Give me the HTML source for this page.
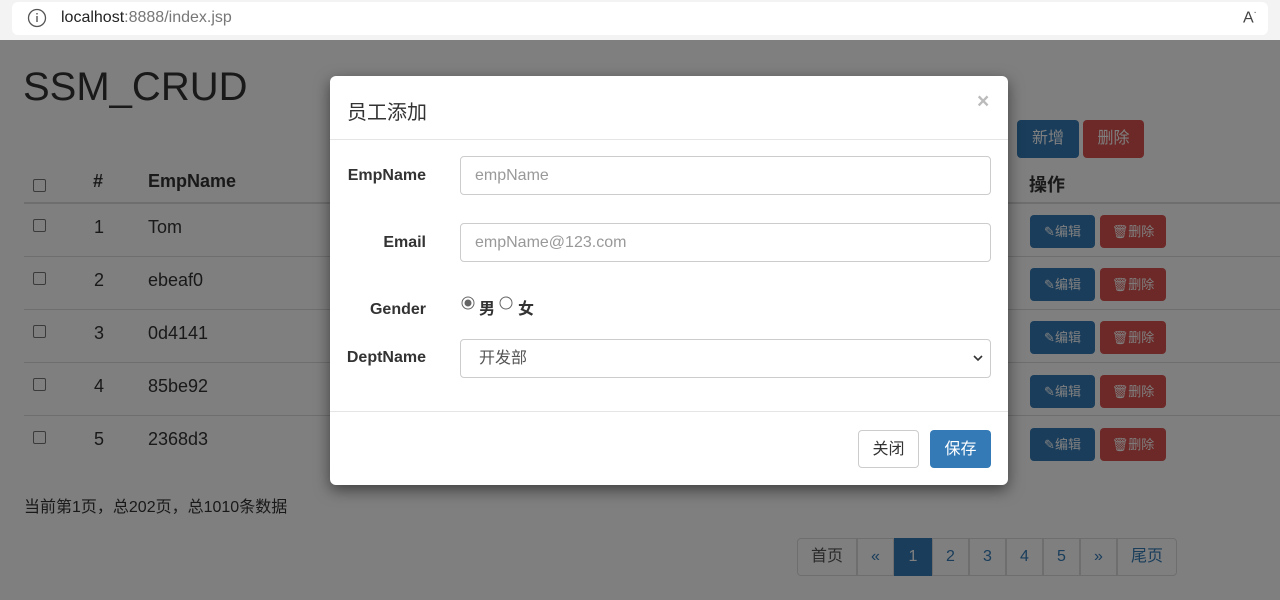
<!DOCTYPE html>
<html><head><meta charset="utf-8"><style>
*{box-sizing:border-box;margin:0;padding:0}
body{width:1280px;height:600px;overflow:hidden;background:#fff;font-family:"Liberation Sans","Noto Sans CJK SC",sans-serif;color:#333;font-size:14px;position:relative}
.a{position:absolute}
.bar{left:0;top:0;width:1280px;height:40px;background:#f3f3f3}
.url{left:12px;top:2px;width:1256px;height:33px;background:#fff;border-radius:6px}
.cb{width:13px;height:13px;border:1px solid #767676;border-radius:2px;background:#fff}
.th{font-weight:bold;font-size:18px}
.td{font-size:18px}
.hl{left:24px;width:1256px;height:1px;background:#ddd}
.btn{border-radius:4px;color:#fff;text-align:center}
.bl{background:#337ab7}.rd{background:#d9534f}
.pg{top:538px;height:38px;border:1px solid #ddd;margin-left:-1px;color:#337ab7;font-size:16px;line-height:36px;text-align:center}
.ov{left:0;top:40px;width:1280px;height:560px;background:rgba(0,0,0,.5)}
.modal{left:330px;top:76px;width:678px;height:409px;background:#fff;border-radius:6px;box-shadow:0 5px 15px rgba(0,0,0,.5)}
.lb{font-weight:bold;font-size:16px;text-align:right;width:96px}
.in{left:130px;width:531px;height:39px;border:1px solid #ccc;border-radius:4px;padding-left:14px;line-height:37px;color:#999;font-size:16px}
</style></head><body>
<div class="a bar"></div><div class="a url"></div>
<svg class="a" style="left:27px;top:8px" width="20" height="20"><circle cx="10" cy="10" r="8.5" fill="none" stroke="#555" stroke-width="1.3"/><rect x="9.3" y="8" width="1.4" height="6" fill="#555"/><rect x="9.3" y="5" width="1.4" height="1.5" fill="#555"/></svg>
<div class="a" style="left:61px;top:9px;font-size:16px;color:#222">localhost<span style="color:#777">:8888/index.jsp</span></div>
<div class="a" style="left:1243px;top:8px;font-size:16px;color:#444">A<sup style="font-size:10px">ᐧ</sup></div>

<div class="a" style="left:23px;top:65px;font-size:40px;color:#333">SSM_CRUD</div>
<div class="a btn bl" style="left:1017px;top:120px;width:62px;height:38px;line-height:38px;font-size:16px">新增</div>
<div class="a btn rd" style="left:1083px;top:120px;width:61px;height:38px;line-height:38px;font-size:16px">删除</div>
<div class="a cb" style="left:33px;top:179px"></div>
<div class="a th" style="left:93px;top:171px">#</div>
<div class="a th" style="left:148px;top:171px">EmpName</div>
<div class="a th" style="left:1029px;top:171px">操作</div>
<div class="a hl" style="top:202px;height:2px"></div>
<div class="a hl" style="top:256px"></div><div class="a hl" style="top:309px"></div><div class="a hl" style="top:362px"></div><div class="a hl" style="top:415px"></div>

<div class="a cb" style="left:33px;top:219px"></div><div class="a td" style="left:94px;top:217px">1</div><div class="a td" style="left:148px;top:217px">Tom</div>
<div class="a cb" style="left:33px;top:272px"></div><div class="a td" style="left:94px;top:270px">2</div><div class="a td" style="left:148px;top:270px">ebeaf0</div>
<div class="a cb" style="left:33px;top:325px"></div><div class="a td" style="left:94px;top:323px">3</div><div class="a td" style="left:148px;top:323px">0d4141</div>
<div class="a cb" style="left:33px;top:378px"></div><div class="a td" style="left:94px;top:376px">4</div><div class="a td" style="left:148px;top:376px">85be92</div>
<div class="a cb" style="left:33px;top:431px"></div><div class="a td" style="left:94px;top:429px">5</div><div class="a td" style="left:148px;top:429px">2368d3</div>

<div class="a btn bl" style="left:1030px;top:215px;width:65px;height:33px;line-height:33px;font-size:13px">✎编辑</div><div class="a btn rd" style="left:1100px;top:215px;width:66px;height:33px;line-height:33px;font-size:13px">🗑删除</div>
<div class="a btn bl" style="left:1030px;top:268px;width:65px;height:33px;line-height:33px;font-size:13px">✎编辑</div><div class="a btn rd" style="left:1100px;top:268px;width:66px;height:33px;line-height:33px;font-size:13px">🗑删除</div>
<div class="a btn bl" style="left:1030px;top:321px;width:65px;height:33px;line-height:33px;font-size:13px">✎编辑</div><div class="a btn rd" style="left:1100px;top:321px;width:66px;height:33px;line-height:33px;font-size:13px">🗑删除</div>
<div class="a btn bl" style="left:1030px;top:375px;width:65px;height:33px;line-height:33px;font-size:13px">✎编辑</div><div class="a btn rd" style="left:1100px;top:375px;width:66px;height:33px;line-height:33px;font-size:13px">🗑删除</div>
<div class="a btn bl" style="left:1030px;top:428px;width:65px;height:33px;line-height:33px;font-size:13px">✎编辑</div><div class="a btn rd" style="left:1100px;top:428px;width:66px;height:33px;line-height:33px;font-size:13px">🗑删除</div>

<div class="a" style="left:24px;top:493px;font-size:16px">当前第1页，总202页，总1010条数据</div>
<div class="a pg" style="left:798px;width:60px;color:#555;border-radius:4px 0 0 4px">首页</div>
<div class="a pg" style="left:858px;width:37px">«</div>
<div class="a pg" style="left:895px;width:38px;background:#337ab7;border-color:#337ab7;color:#fff">1</div>
<div class="a pg" style="left:933px;width:37px">2</div>
<div class="a pg" style="left:970px;width:37px">3</div>
<div class="a pg" style="left:1007px;width:37px">4</div>
<div class="a pg" style="left:1044px;width:37px">5</div>
<div class="a pg" style="left:1081px;width:37px">»</div>
<div class="a pg" style="left:1118px;width:60px;border-radius:0 4px 4px 0">尾页</div>

<div class="a ov"></div>
<div class="a modal">
 <div class="a" style="left:17px;top:20px;font-size:20px;color:#333">员工添加</div>
 <div class="a" style="left:647px;top:14px;font-size:21px;font-weight:bold;color:#bbb">×</div>
 <div class="a" style="left:0;top:63px;width:678px;height:1px;background:#e5e5e5"></div>
 <div class="a lb" style="left:0;top:91px">EmpName</div>
 <div class="a in" style="top:80px">empName</div>
 <div class="a lb" style="left:0;top:158px">Email</div>
 <div class="a in" style="top:147px">empName@123.com</div>
 <div class="a lb" style="left:0;top:225px">Gender</div>
 <svg class="a" style="left:131px;top:220px" width="14" height="14"><circle cx="7" cy="7" r="6" fill="#fff" stroke="#666"/><circle cx="7" cy="7" r="3.5" fill="#666"/></svg>
 <div class="a" style="left:149px;top:219px;font-size:16px;font-weight:bold">男</div>
 <svg class="a" style="left:169px;top:220px" width="14" height="14"><circle cx="7" cy="7" r="6" fill="#fff" stroke="#666"/></svg>
 <div class="a" style="left:188px;top:219px;font-size:16px;font-weight:bold">女</div>
 <div class="a lb" style="left:0;top:273px">DeptName</div>
 <div class="a in" style="top:263px;color:#555;padding-left:18px">开发部<svg style="position:absolute;right:6px;top:14px" width="12" height="10"><path d="M2 2l4 4 4-4" fill="none" stroke="#333" stroke-width="1.6"/></svg></div>
 <div class="a" style="left:0;top:335px;width:678px;height:1px;background:#e5e5e5"></div>
 <div class="a" style="left:528px;top:354px;width:61px;height:38px;border:1px solid #ccc;border-radius:4px;text-align:center;line-height:37px;font-size:16px;color:#333">关闭</div>
 <div class="a btn bl" style="left:600px;top:354px;width:61px;height:38px;line-height:39px;font-size:16px">保存</div>
</div>
</body></html>
